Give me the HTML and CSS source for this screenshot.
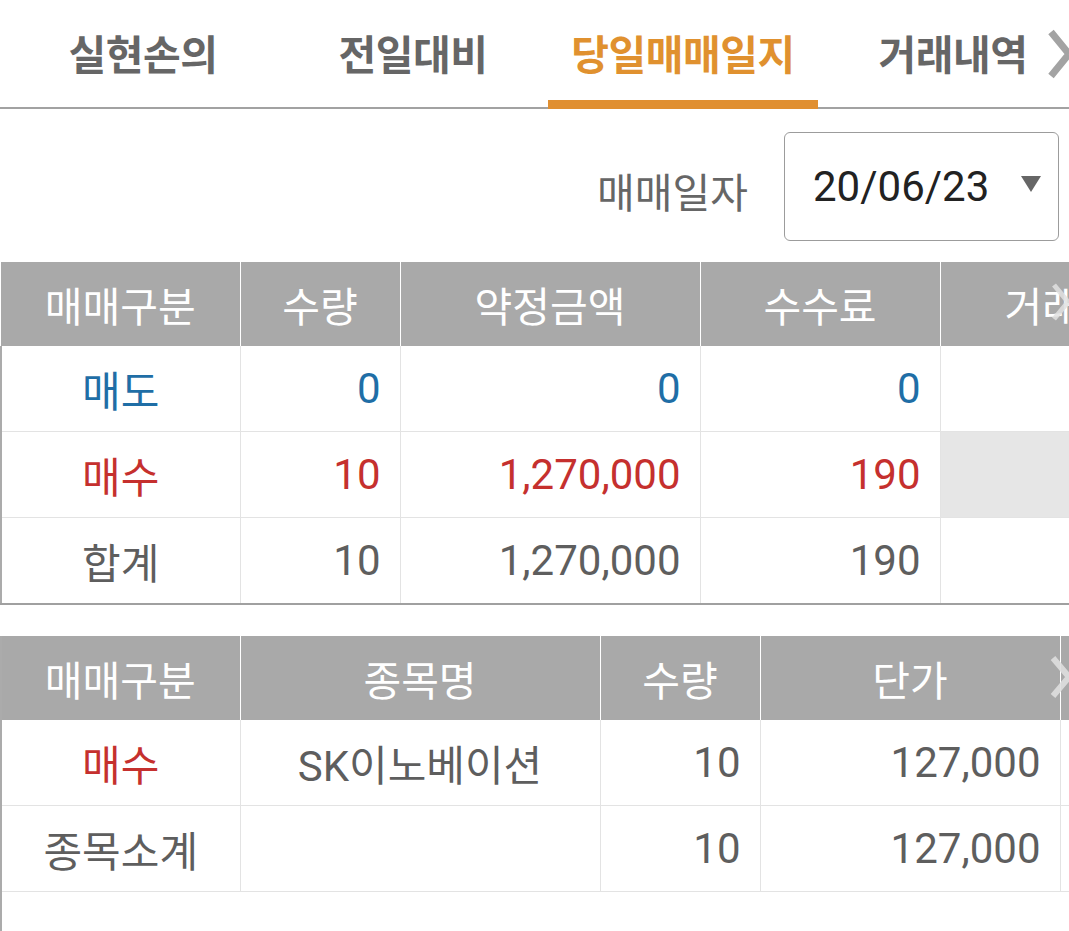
FILE: index.html
```html
<!DOCTYPE html>
<html lang="ko">
<head>
<meta charset="utf-8">
<title>당일매매일지</title>
<link rel="stylesheet" href="styles.css">
</head>
<body>
<div class="page">
  <nav class="tabs">
    <div class="tab">실현손의</div>
    <div class="tab">전일대비</div>
    <div class="tab active">당일매매일지</div>
    <div class="tab">거래내역</div>
    <svg class="chev chev-tab" viewBox="0 0 30 52" width="30" height="52"><path d="M5 4 L23 26 L5 48" fill="none" stroke="#a3a3a3" stroke-width="7"/></svg>
  </nav>

  <div class="date-row">
    <span class="date-label">매매일자</span>
    <div class="date-select">
      <span class="date-value">20/06/23</span>
      <svg class="caret" viewBox="0 0 20 16" width="20" height="16"><path d="M0 0 L20 0 L10 16 Z" fill="#666"/></svg>
    </div>
  </div>

  <div class="table-wrap summary">
    <table class="grid">
      <colgroup>
        <col class="w239"><col class="w160"><col class="w300"><col class="w240"><col class="w274">
      </colgroup>
      <thead>
        <tr><th>매매구분</th><th>수량</th><th>약정금액</th><th>수수료</th><th class="left">거래내역</th></tr>
      </thead>
      <tbody>
        <tr><td class="c blue">매도</td><td class="r blue">0</td><td class="r blue">0</td><td class="r blue">0</td><td></td></tr>
        <tr><td class="c red">매수</td><td class="r red">10</td><td class="r red">1,270,000</td><td class="r red">190</td><td class="shade"></td></tr>
        <tr><td class="c">합계</td><td class="r">10</td><td class="r">1,270,000</td><td class="r">190</td><td></td></tr>
      </tbody>
    </table>
    <svg class="chev chev-head1" viewBox="0 0 24 40" width="24" height="40"><path d="M4 3 L18 20 L4 37" fill="none" stroke="rgba(225,225,225,0.85)" stroke-width="5"/></svg>
  </div>

  <div class="table-wrap detail">
    <table class="grid">
      <colgroup>
        <col class="w239"><col class="w360"><col class="w160"><col class="w300"><col class="w200">
      </colgroup>
      <thead>
        <tr><th>매매구분</th><th>종목명</th><th>수량</th><th>단가</th><th></th></tr>
      </thead>
      <tbody>
        <tr><td class="c red">매수</td><td class="c">SK이노베이션</td><td class="r">10</td><td class="r">127,000</td><td></td></tr>
        <tr><td class="c">종목소계</td><td></td><td class="r">10</td><td class="r">127,000</td><td></td></tr>
      </tbody>
    </table>
    <svg class="chev chev-head2" viewBox="0 0 26 46" width="26" height="46"><path d="M5 4 L21 23 L5 42" fill="none" stroke="rgba(222,222,222,0.9)" stroke-width="6"/></svg>
  </div>
</div>
</body>
</html>
```

FILE: styles.css
```css
html, body {
  margin: 0;
  padding: 0;
  background: #fff;
}

body {
  font-family: Roboto, "Noto Sans CJK KR", sans-serif;
  color: #5e5e5e;
  width: 1069px;
  height: 931px;
  overflow: hidden;
}

.page {
  position: relative;
  width: 1069px;
  height: 931px;
  overflow: hidden;
}

/* Tabs */
.tabs {
  position: relative;
  display: flex;
  padding-left: 8px;
  height: 107px;
  border-bottom: 2px solid #a2a2a2;
  width: 1300px;
}

.tab {
  position: relative;
  flex: 0 0 270px;
  display: flex;
  align-items: center;
  justify-content: center;
  padding-bottom: 4px;
  font-family: "Noto Sans CJK KR", sans-serif;
  font-weight: 700;
  font-size: 41px;
  color: #666;
  letter-spacing: -0.5px;
}

.tab.active {
  color: #e0912f;
}

.tab.active::after {
  content: "";
  position: absolute;
  left: 0;
  right: 0;
  bottom: -2px;
  height: 9px;
  background: #e08f31;
}

.chev {
  position: absolute;
  display: block;
}

.chev-tab {
  left: 1046px;
  top: 28px;
}

/* Date row */
.date-row {
  display: flex;
  align-items: center;
  justify-content: flex-end;
  gap: 36px;
  padding: 23px 10px 21px 0;
}

.date-label {
  font-family: "Noto Sans CJK KR", sans-serif;
  font-size: 41px;
  color: #666;
  padding-top: 6px;
}

.date-select {
  box-sizing: border-box;
  width: 275px;
  height: 109px;
  border: 1px solid #9c9c9c;
  border-radius: 6px;
  display: flex;
  align-items: center;
  justify-content: space-between;
  padding: 0 17px 0 28px;
}

.date-value {
  font-family: Roboto, sans-serif;
  font-size: 42px;
  color: #222;
}

.caret {
  display: block;
  margin-top: -6px;
}

/* Tables */
.table-wrap {
  position: relative;
  width: 1069px;
  overflow: hidden;
}

.summary {
  border-bottom: 2px solid #a0a0a0;
}

.detail {
  margin-top: 31px;
  border-left: 2px solid #ababab;
  box-sizing: border-box;
  height: 300px;
}

.grid {
  border-collapse: collapse;
  table-layout: fixed;
  font-size: 42px;
}

.summary .grid {
  width: 1213px;
}

.detail .grid {
  width: 1259px;
  margin-left: -2px;
}

.w239 { width: 239px; }
.w160 { width: 160px; }
.w300 { width: 300px; }
.w240 { width: 240px; }
.w274 { width: 274px; }
.w360 { width: 360px; }
.w200 { width: 200px; }

.grid th {
  height: 84px;
  padding: 0;
  background: #a9a9a9;
  color: #fff;
  font-family: "Noto Sans CJK KR", sans-serif;
  font-weight: 400;
  font-size: 41px;
  text-align: center;
  border-left: 1px solid #fff;
  box-sizing: border-box;
}

.grid th:first-child {
  border-left: none;
}

.grid th.left {
  text-align: left;
  padding-left: 64px;
}

.grid td {
  height: 85px;
  padding: 0 19px;
  border-left: 1px solid #e3e3e3;
  border-top: 1px solid #e3e3e3;
  white-space: nowrap;
}

.summary .grid td:first-child {
  border-left: 2px solid #ababab;
}

.grid tbody tr:first-child td {
  border-top: none;
}

.detail .grid tbody tr:last-child td {
  border-bottom: 1px solid #e3e3e3;
}

.detail .grid td:first-child {
  border-left: 2px solid #ababab;
}

.c { text-align: center; }
.r { text-align: right; }

.blue { color: #1f6ea6; }
.red { color: #c5302e; }

.shade { background: #e6e6e6; }

.chev-head1 {
  left: 1050px;
  top: 20px;
}

.chev-head2 {
  left: 1046px;
  top: 18px;
}
```
